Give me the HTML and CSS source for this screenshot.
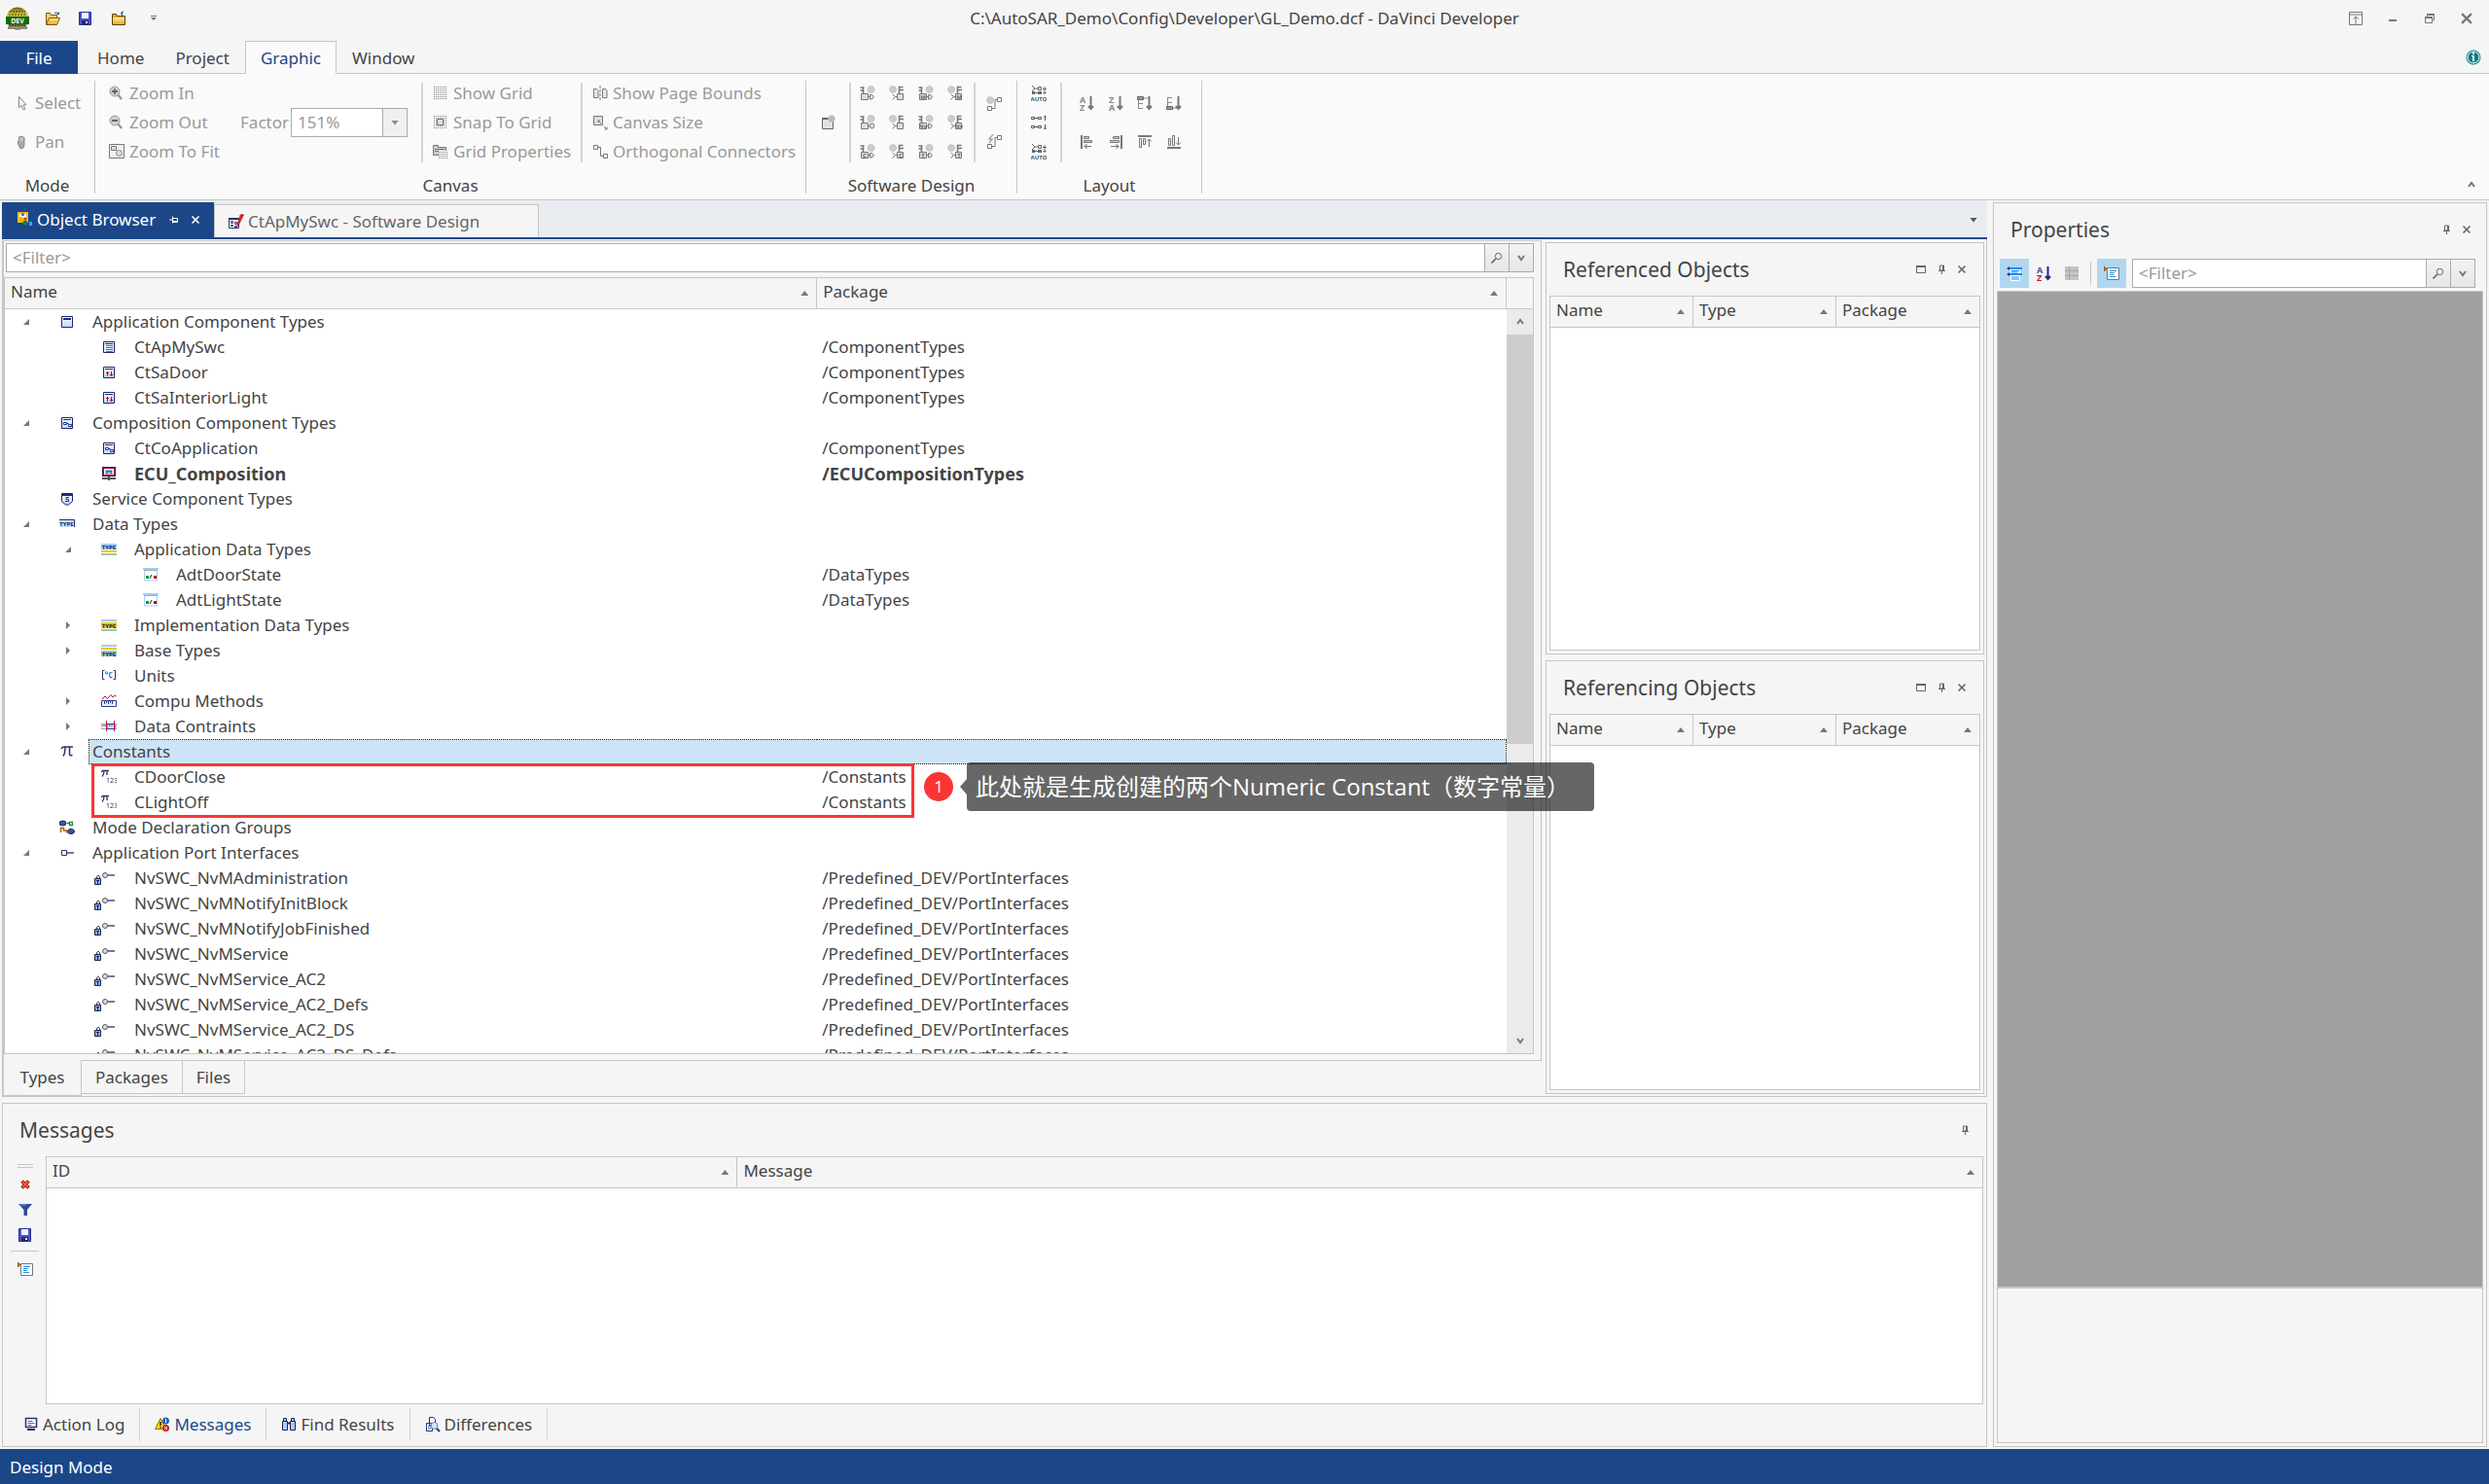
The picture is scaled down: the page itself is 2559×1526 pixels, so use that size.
FILE: index.html
```html
<!DOCTYPE html>
<html lang="en">
<head>
<meta charset="utf-8">
<title>GL_Demo.dcf - DaVinci Developer</title>
<link rel="stylesheet" href="styles.css">
</head>
<body>
<svg class="paints" aria-hidden="true">
  <defs>
    <linearGradient id="gold" x1="0" y1="0" x2="0" y2="1"><stop offset="0" stop-color="#ffe9a0"/><stop offset="1" stop-color="#f0a81c"/></linearGradient>
    <linearGradient id="sky" x1="0" y1="0" x2="0" y2="1"><stop offset="0" stop-color="#fff"/><stop offset="1" stop-color="#bcd6fa"/></linearGradient>
    <linearGradient id="ball" x1="0" y1="0" x2="0" y2="1"><stop offset="0" stop-color="#6a5a10"/><stop offset=".3" stop-color="#e0c63a"/><stop offset="1" stop-color="#5e4d0c"/></linearGradient>
  </defs>
</svg>
<svg class="symbols" aria-hidden="true">
  <symbol id="logo" viewBox="0 0 24 24"><circle cx="12" cy="12" r="11.500" fill="url(#ball)"/><path d="M4 5h16M3 8h18M3 19h18" stroke="#3b320a" stroke-dasharray="2 1"/><rect y="10" width="24" height="8" fill="#0b6b12"/><path d="M2 20h20v3H2z" fill="#8d8a7a"/><text x="12" y="16.500" font-size="7" font-weight="700" text-anchor="middle" fill="#fff">DEV</text></symbol>
  <symbol id="open" viewBox="0 0 16 16"><path d="M1.500 14.500v-12h4l1 2h6v3" fill="#f7cf6a" stroke="#7a5a18"/><path d="M1.500 14.500l3-7h11l-3 7z" fill="url(#gold)" stroke="#7a5a18"/><path d="M10 2.500q3-2 4 1M12.500 3.500h2v-2" fill="none" stroke="#2c4a82"/></symbol>
  <symbol id="save" viewBox="0 0 16 16"><path d="M1.500 1.500h12v13h-12z" fill="#4a52c8" stroke="#2b2f8c"/><path d="M4 2h7v6H4z" fill="#eef4ff"/><path d="M4 10h7v4H4z" fill="#26295e"/><path d="M8 11h2v2H8z" fill="#fff"/></symbol>
  <symbol id="closef" viewBox="0 0 16 16"><path d="M1.500 14.500v-11h4l1 2h8v9z" fill="#e8a81c" stroke="#5c430c"/><path d="M2 7h12v7H2z" fill="url(#gold)"/><path d="M11.500 5V1.500M10 3l1.500-1.500L13 1" fill="none" stroke="#2c4a82"/></symbol>
  <symbol id="more" viewBox="0 0 8 8"><path d="M1 1.500h6" stroke="#777"/><path d="M1 3h6L4 6z" fill="#777"/></symbol>
  <symbol id="pin" viewBox="0 0 10 10"><path d="M3.500 1h4v5h-4zM2 6.500h7M5.500 7v3" fill="none" stroke="#666"/><path d="M6 1h2v5H6z" fill="#666"/></symbol>
  <symbol id="pinside" viewBox="0 0 10 10"><path d="M3.500 1.500v7M0 5h3M4 3.500h4.500v4H4M4 6.500h4" fill="none" stroke="#fff"/></symbol>
  <symbol id="x" viewBox="0 0 10 10"><path d="M1.500 1.500l7 7M8.500 1.500l-7 7" fill="none" stroke="currentColor" stroke-width="1.600"/></symbol>
  <symbol id="max" viewBox="0 0 10 10"><path d="M.5 2h9v6.500h-9z" fill="none" stroke="#666"/><path d="M0 1h10v2H0z" fill="#666"/></symbol>
  <symbol id="ribbonmin" viewBox="0 0 14 14"><path d="M.5.5h13v13H.5zM1 3h12M7 13V5M4.500 7.500L7 5l2.500 2.500" fill="none" stroke="#777"/></symbol>
  <symbol id="min" viewBox="0 0 14 14"><path d="M3 8h8v2H3z" fill="#777"/></symbol>
  <symbol id="restore" viewBox="0 0 14 14"><path d="M2.500 6.500h7v5h-7zM4.500 5V3.500h7v5H10" fill="none" stroke="#777"/><path d="M2 5h8v2H2zM4 2h8v2H4z" fill="#777"/></symbol>
  <symbol id="info" viewBox="0 0 16 16"><circle cx="8" cy="8" r="7.500" fill="#0a8a90"/><circle cx="8" cy="8" r="6" fill="#0b7f85" stroke="#fff"/><path d="M7 3h2v2H7zM6 6h3v6H7V7H6z" fill="#fff"/></symbol>
  <symbol id="mag" viewBox="0 0 12 12"><circle cx="7.500" cy="4.500" r="3.200" fill="none" stroke="#666"/><path d="M5 7l-4.500 4.500" stroke="#666" stroke-width="1.600"/></symbol>
  <symbol id="chev" viewBox="0 0 10 10"><path d="M2 3l3 4 3-4" fill="none" stroke="#777" stroke-width="2"/></symbol>
  <symbol id="chevup" viewBox="0 0 10 10"><path d="M2 7l3-4 3 4" fill="none" stroke="#777" stroke-width="2"/></symbol>

  <symbol id="arrow" viewBox="0 0 16 16"><path d="M5.500 1.500v11l2.500-2 2 4.500 2-1-2-4 3-.5z" fill="#f2f2f2" stroke="#888"/></symbol>
  <symbol id="hand" viewBox="0 0 16 16"><path d="M6 13q-2-3-1.500-6l1-.5V3q1-1.500 1.500 0 1-2 2 0 1.500-1 2 1v6q0 3-1.500 4.500h-3z" fill="#aaa" stroke="#888"/><path d="M7 3v4M9 3v4" stroke="#eee" stroke-width=".7"/></symbol>
  <symbol id="zin" viewBox="0 0 16 16"><path d="M9 9l4 5" stroke="#999" stroke-width="2.400"/><circle cx="6" cy="6" r="5" fill="#d0d0d0" stroke="#9a9a9a"/><path d="M3 6h6M6 3v6" stroke="#666" stroke-width="1.800"/></symbol>
  <symbol id="zout" viewBox="0 0 16 16"><path d="M9 9l4 5" stroke="#999" stroke-width="2.400"/><circle cx="6" cy="6" r="5" fill="#d0d0d0" stroke="#9a9a9a"/><path d="M3 6h6" stroke="#666" stroke-width="2"/></symbol>
  <symbol id="zfit" viewBox="0 0 16 16"><path d="M.5.5h15v14H.5z" fill="#f0f0f0" stroke="#777"/><path d="M2.500 2.500h5v4h-5z" fill="#ddd" stroke="#777"/><circle cx="10.500" cy="9.500" r="3" fill="#ddd" stroke="#888"/></symbol>
  <symbol id="grid" viewBox="0 0 16 16"><path d="M1 1.500h13M1 3.500h13M1 5.500h13M1 7.500h13M1 9.500h13M1 11.500h13M1 13.500h13" stroke="#777" stroke-dasharray="1 1"/></symbol>
  <symbol id="snap" viewBox="0 0 16 16"><path d="M1 1.500h13M1 3.500h13M1 5.500h13M1 7.500h13M1 9.500h13M1 11.500h13M1 13.500h13" stroke="#777" stroke-dasharray="1 1"/><path d="M4.500 4.500h6v6h-6z" fill="#ddd" stroke="#777"/></symbol>
  <symbol id="gridp" viewBox="0 0 16 16"><path d="M.5 3.500v-2h5v2h8v8H.5z" fill="#ccc" stroke="#777"/><path d="M2 5.500h10M2 7.500h4" stroke="#777"/><path d="M6 7h9v8H6z" fill="#fafafa"/><path d="M6 8.500h9M6 10.500h9M6 12.500h9M6 14.500h9" stroke="#777" stroke-dasharray="1 1"/></symbol>
  <symbol id="pages" viewBox="0 0 16 16"><path d="M1.500 3.500h3l1.500 2v7H1.500zM10.500 3.500h3l1.500 2v7h-4.500z" fill="#e8e8e8" stroke="#777"/><path d="M8 0v16" stroke="#777" stroke-dasharray="3 1"/></symbol>
  <symbol id="csize" viewBox="0 0 16 16"><path d="M1.500 1.500h9v9h-9z" fill="#ddd" stroke="#777"/><path d="M9 9L6 6M6 8V6h2M12 12l3 3M15 12.500V15h-2.500" stroke="#777" fill="none"/></symbol>
  <symbol id="ortho" viewBox="0 0 16 16"><path d="M1.500 1.500h4v4h-4zM11.500 10.500h4v4h-4zM5.500 3.500h3v9h3" fill="none" stroke="#777"/></symbol>
  <symbol id="newc" viewBox="0 0 16 16"><path d="M2.500 3.500h11v11h-11z" fill="#e2e2e2" stroke="#666"/><path d="M2 3h7v2H2z" fill="#666"/><circle cx="12" cy="4" r="3.500" fill="#bbb" stroke="#ccc" stroke-dasharray="1 1"/></symbol>
  <symbol id="pport" viewBox="0 0 16 16"><path d="M.5 2h4M3.500 2v6M.5 5h3" stroke="#777" stroke-width="1.600" fill="none"/><circle cx="11.500" cy="4" r="3.500" fill="#ccc" stroke="#aaa" stroke-dasharray="1 1"/><path d="M1.500 8.500h7v6h-7zM8.500 11.500h2M10.500 9.500h2l2 2-2 2.500h-2z" fill="#ddd" stroke="#777"/></symbol>
  <symbol id="sport" viewBox="0 0 16 16"><path d="M.5 2h4M3.500 2v6M.5 5h3" stroke="#777" stroke-width="1.600" fill="none"/><circle cx="11.500" cy="4" r="3.500" fill="#ccc" stroke="#aaa" stroke-dasharray="1 1"/><path d="M1.500 8.500h7v6h-7zM8.500 11.500h2" fill="#ddd" stroke="#777"/><circle cx="12.500" cy="11.500" r="2.500" fill="#ddd" stroke="#777"/></symbol>
  <symbol id="rport" viewBox="0 0 16 16"><path d="M10.500 8V1.500h4M11 4.500h4" stroke="#777" stroke-width="1.600" fill="none"/><circle cx="4" cy="4" r="3.500" fill="#ccc" stroke="#aaa" stroke-dasharray="1 1"/><path d="M8.500 8.500h6v6h-6z" fill="#ddd" stroke="#777"/><path d="M3.500 9l3 2.500-3 3M6.500 11.500h2" fill="none" stroke="#777"/></symbol>
  <symbol id="conn" viewBox="0 0 16 16"><circle cx="4" cy="5" r="3.500" fill="#ccc" stroke="#aaa" stroke-dasharray="1 1"/><path d="M11.500 2.500h4v4h-4zM1.500 11.500h4v4h-4zM11 4.500H9v9H6" fill="none" stroke="#777"/></symbol>
  <symbol id="conn2" viewBox="0 0 16 16"><path d="M7 0L3 5h3l-3 4" fill="none" stroke="#aaa" stroke-width="1.500"/><path d="M11.500 1.500h4v4h-4zM1.500 10.500h4v4h-4zM11 3.500H9v9H6" fill="none" stroke="#777"/></symbol>
  <symbol id="auto" viewBox="0 0 16 16"><path d="M1 0l3 3h3M1 6l3-3M7.500 1.500h3v3h-3zM2 7.500h6M12 3.500h4M14 1v8M12.500 7.500h3" fill="none" stroke="#666"/><path d="M1 6h3v3H1zM7 6h4v3H7z" fill="#666"/><text x="8" y="16" font-size="6" font-weight="700" text-anchor="middle" fill="#555">AUTO</text></symbol>
  <symbol id="dist" viewBox="0 0 16 16"><path d="M.5 2.500h3v2h-3zM7.500 2.500h3v2h-3zM3 3.500h4M14.500 6V1M13 2.500L14.500 1 16 2.500M.5 11.500h3v2h-3zM7.500 11.500h3v2h-3zM3 12.500h4M14.500 10v5M13 13.500l1.500 1.500 1.500-1.500" fill="none" stroke="#555"/></symbol>
  <symbol id="az" viewBox="0 0 16 16"><text x="1" y="7.500" font-size="9" font-weight="700" fill="#888">A</text><text x="1" y="15.500" font-size="9" font-weight="700" fill="#888">Z</text><path d="M12.500 1v12M10 11l2.500 3 2.500-3" fill="none" stroke="#777" stroke-width="2"/></symbol>
  <symbol id="za" viewBox="0 0 16 16"><text x="1" y="7.500" font-size="9" font-weight="700" fill="#888">Z</text><text x="1" y="15.500" font-size="9" font-weight="700" fill="#888">A</text><path d="M12.500 1v12M10 11l2.500 3 2.500-3" fill="none" stroke="#777" stroke-width="2"/></symbol>
  <symbol id="azc" viewBox="0 0 16 16"><text x="1" y="7.500" font-size="9" font-weight="700" fill="#4a4f94">A</text><text x="1" y="15.500" font-size="9" font-weight="700" fill="#c3122e">Z</text><path d="M12.500 1v12M10 11l2.500 3 2.500-3" fill="none" stroke="#1f2a80" stroke-width="2"/></symbol>
  <symbol id="st" viewBox="0 0 16 16"><path d="M.5 1.500h6v3h-6z" fill="#999" stroke="#666"/><path d="M1.500 5v9M2 8.500h4M2 13.500h4M7 3h4" fill="none" stroke="#888"/><path d="M12.500 1v12M10 11l2.500 3 2.500-3" fill="none" stroke="#777" stroke-width="2"/></symbol>
  <symbol id="sb" viewBox="0 0 16 16"><path d="M.5 11.500h6v3h-6z" fill="#999" stroke="#666"/><path d="M1.500 2v9M2 2.500h4M2 7.500h4M7 13h4" fill="none" stroke="#888"/><path d="M12.500 1v12M10 11l2.500 3 2.500-3" fill="none" stroke="#777" stroke-width="2"/></symbol>
  <symbol id="al" viewBox="0 0 16 16"><path d="M3 1v14" stroke="#777" stroke-width="2"/><path d="M5.500 2.500h5v2h-5zM5.500 6.500h8v2h-8zM13 12.500H6M8.500 10L6 12.500 8.500 15" fill="#ccc" stroke="#777"/></symbol>
  <symbol id="ar" viewBox="0 0 16 16"><path d="M14 1v14" stroke="#777" stroke-width="2"/><path d="M5.500 2.500h6v2h-6zM2.500 6.500h9v2h-9zM3 12.500h8M8.500 10l2.500 2.500L8.500 15" fill="#ccc" stroke="#777"/></symbol>
  <symbol id="at" viewBox="0 0 16 16"><path d="M1 2h14" stroke="#777" stroke-width="2"/><path d="M2.500 4.500h2v9h-2zM6.500 4.500h2v6h-2zM12.500 13V5M10 7.500L12.500 5 15 7.500" fill="none" stroke="#777"/></symbol>
  <symbol id="ab" viewBox="0 0 16 16"><path d="M1 14h14" stroke="#777" stroke-width="2"/><path d="M2.500 4.500h2v7h-2zM6.500 1.500h2v10h-2zM12.500 3v8M10 8.500l2.500 2.500L15 8.500" fill="none" stroke="#777"/></symbol>

  <symbol id="obj" viewBox="0 0 16 16"><path d="M1 1h9v9H1z" fill="#fff" stroke="#f0c030" stroke-width="2"/><path d="M4 1h3v3H4z" fill="#4a7ad0"/><circle cx="4" cy="8" r="3" fill="#f5b400"/><circle cx="8" cy="11" r="2.500" fill="#14843c"/><circle cx="8" cy="7" r="1.500" fill="#d8222e"/><path d="M12 10h3v4h-3z" fill="#3aa0f0"/></symbol>
  <symbol id="sdes" viewBox="0 0 16 16"><path d="M.5 4.500h10v10H.5z" fill="#fff" stroke="#2b2f5e"/><path d="M0 4h10v2H0z" fill="#2b2f5e"/><path d="M2.500 7.500h2v2h-2zM6.500 8.500h2v2h-2zM2.500 11.500h2v1h-2zM6.500 12.500h2v1h-2z" fill="none" stroke="#33387a"/><path d="M15.500 1l-5 10-1.500 2 .2-3L12 1q2-1.500 3.500 0z" fill="#e0222e" stroke="#a01020" stroke-width=".6"/></symbol>

  <symbol id="win" viewBox="0 0 16 16"><path d="M2.500 2.500h11v11h-11z" fill="url(#sky)" stroke="#22226a"/><path d="M4 4h8v2H4z" fill="#1b2c7c"/></symbol>
  <symbol id="swc" viewBox="0 0 16 16"><path d="M2.500 2.500h11v11h-11z" fill="#e8f3ff" stroke="#22226a"/><path d="M4 4h8v1H4z" fill="#1b2c7c"/><path d="M5 6.500h7M5 8.500h7M5 10.500h7M5 12.500h7" stroke="#0a84e0"/></symbol>
  <symbol id="sa" viewBox="0 0 16 16"><path d="M2.500 2.500h11v11h-11z" fill="url(#sky)" stroke="#22226a"/><path d="M4 4h8v1H4z" fill="#1b2c7c"/><path d="M6.500 12V7M5 8.500h3M10.500 7v5M9 10.500h3" stroke="#b8002a"/></symbol>
  <symbol id="comp" viewBox="0 0 16 16"><path d="M2.500 2.500h11v11h-11z" fill="url(#sky)" stroke="#22226a"/><path d="M4 4h8v1H4z" fill="#1b2c7c"/><path d="M4.500 7.500h3v2h-3zM9.500 9.500h3v2h-3zM8 8.500h1.500" fill="#fff" stroke="#123a9a"/></symbol>
  <symbol id="ecu" viewBox="0 0 16 16"><path d="M2 2h12v8H2z" fill="#fff" stroke="#3a1c4c" stroke-width="2"/><path d="M2.500 2.500h11v7h-11z" fill="none" stroke="#a01040"/><path d="M4.500 5.500h7M4.500 7.500h3M8.500 7.500h3" stroke="#0a5aa8" stroke-width="1.500"/><path d="M1 13h14M8 11v4" stroke="#555" stroke-width="2"/></symbol>
  <symbol id="svc" viewBox="0 0 16 16"><path d="M2.500 2.500h11v8l-4 3.500h-3l-4-3.500z" fill="url(#sky)" stroke="#22226a"/><path d="M3 3h10v2H3z" fill="#1b2c7c"/><path d="M10 6.500H7v2h2.500v2H6" fill="none" stroke="#2f2f74"/></symbol>
  <symbol id="type" viewBox="0 0 16 16"><path d="M0 3h15v8H0z" fill="#c4e0ff"/><path d="M0 3.500h15.500V11" fill="none" stroke="#2f2f74"/><text x="7.500" y="10" font-size="6" font-weight="700" text-anchor="middle" fill="#22225c">TYPE</text></symbol>
  <symbol id="adt" viewBox="0 0 16 16"><path d="M0 2h16v6H0z" fill="#9fcdfa"/><path d="M0 9h16v2H0z" fill="#f5c400"/><path d="M0 12h16v2H0z" fill="#9cc8b0"/><text x="8" y="7.500" font-size="6" font-weight="700" text-anchor="middle" fill="#22225c">TYPE</text></symbol>
  <symbol id="idt" viewBox="0 0 16 16"><path d="M0 2h16v2H0z" fill="#9fcdfa"/><path d="M0 5h16v6H0z" fill="#f5c400"/><path d="M0 12h16v2H0z" fill="#9cc8b0"/><text x="8" y="10.500" font-size="6" font-weight="700" text-anchor="middle" fill="#22225c">TYPE</text></symbol>
  <symbol id="bdt" viewBox="0 0 16 16"><path d="M0 2h16v2H0z" fill="#9fcdfa"/><path d="M0 5h16v2H0z" fill="#f5c400"/><path d="M0 8h16v6H0z" fill="#9cc8b0"/><text x="8" y="13.500" font-size="6" font-weight="700" text-anchor="middle" fill="#22225c">TYPE</text></symbol>
  <symbol id="enum" viewBox="0 0 16 16"><path d="M1.500 2v12h13V2" fill="#fff" stroke="#9fcdfa"/><path d="M0 1h16v2H0z" fill="#9fcdfa"/><path d="M1 3h14v1H1z" fill="#aaa"/><path d="M3 9h3v3H3z" fill="#0a9a1c"/><path d="M7 12l2-4" stroke="#222"/><path d="M11 9h3v3h-3z" fill="#b8002a"/></symbol>
  <symbol id="unit" viewBox="0 0 16 16"><path d="M3.500 2.500h-2v9h2M12.500 2.500h2v9h-2" fill="none" stroke="#2f2f74"/><circle cx="5.500" cy="5" r="1.200" fill="none" stroke="#0a84d0"/><path d="M11.500 5q-3-1.500-3 2t3 2.500" fill="none" stroke="#0a84d0" stroke-width="1.300"/></symbol>
  <symbol id="compu" viewBox="0 0 16 16"><path d="M1 6l3-3 2.500 2.500L10 1.500 12 4l2-2 1.500 1" fill="none" stroke="#b8104a"/><path d="M.5 7.500h15v6H.5z" fill="#e0f0ff" stroke="#2f3f8c"/><path d="M3.500 8v3M5.500 8v2M7.500 8v3M9.500 8v2M11.500 8v3" stroke="#2f3f8c"/></symbol>
  <symbol id="constr" viewBox="0 0 16 16"><path d="M0 5.500h16v5H0z" fill="#eee" stroke="#aaa"/><path d="M6 5.500h8v5H6z" fill="#cfe4ff" stroke="#2f3f8c"/><path d="M2 6v2M4 6v2M8.500 6v2M11 6v2" stroke="#667"/><path d="M5.500 2v11M13.500 2v11" stroke="#c0104a"/></symbol>
  <symbol id="pi" viewBox="0 0 16 16"><path d="M2 5q1-2 3-2h9M6 3.500q0 6-2 9M10.500 3.500v7q.5 2 3 1" fill="none" stroke="#2f2f64" stroke-width="1.500"/></symbol>
  <symbol id="pinum" viewBox="0 0 16 16"><path d="M0 3q1-1.500 2-1.500h6M3 2q0 3-2 5.500M6 2v4" fill="none" stroke="#2f2f64" stroke-width="1.300"/><text x="5" y="14" font-size="7" fill="#2f2f64">123</text></symbol>
  <symbol id="mode" viewBox="0 0 16 16"><ellipse cx="3.500" cy="3.500" rx="3.500" ry="2.500" fill="#3a58a0" stroke="#1c2450"/><ellipse cx="12" cy="12" rx="3.500" ry="2.500" fill="#3a58a0" stroke="#1c2450"/><path d="M8 3.500h2M10.500 2.500h3v3h-3z" fill="none" stroke="#1c8a50" stroke-width="1.300"/><path d="M1.500 13V8.500h3V11h3v2.500" fill="none" stroke="#b86010" stroke-width="1.500"/></symbol>
  <symbol id="port" viewBox="0 0 16 16"><path d="M2.500 5.500h5v5h-5z" fill="#fff" stroke="#2f2f64"/><path d="M8 8h7" stroke="#2f2f64" stroke-width="1.300"/></symbol>
  <symbol id="nv" viewBox="0 0 22 16"><path d="M2.500 8V6.500q1.500-2.500 3 0V8" fill="none" stroke="#333"/><path d="M.5 8.500h6v6h-6z" fill="#8faaf0" stroke="#1c2450"/><path d="M2 10.500h3M3.500 11v3" stroke="#1c2450"/><circle cx="11" cy="5" r="2.500" fill="#ddd" stroke="#556"/><path d="M14 5h7" stroke="#2f2f64" stroke-width="1.300"/></symbol>
  <symbol id="del" viewBox="0 0 16 16"><path d="M4.500 4.500l7 7M11.500 4.500l-7 7" stroke="#a01c08" stroke-width="3.600"/><path d="M5 5l6 6M11 5l-6 6" stroke="#ff6a3a" stroke-width="1.600"/></symbol>
  <symbol id="funnel" viewBox="0 0 16 16"><path d="M1 2h14L10 8v6H6.500V8z" fill="#2f4a9a"/><path d="M3 3h6" stroke="#7ba0d8"/></symbol>
  <symbol id="desc" viewBox="0 0 16 16"><path d="M3.500 2.500h12v12h-12z" fill="#fff" stroke="#777"/><path d="M6 5.500h7M6 7.500h5M6 9.500h4M6 11.500h6" stroke="#1c90e8"/><path d="M0 1l3 2.500L0 6z" fill="#b87414" stroke="#8a5408"/></symbol>
  <symbol id="cat" viewBox="0 0 16 16"><path d="M4 2h10v14H4z" fill="#fff"/><path d="M2 3h14M2 9h14" stroke="#0a8cf0" stroke-width="2"/><path d="M5 5.500h8M5 7h6M5 12h8M5 14h8" stroke="#0a8cf0"/><path d="M0 3l3-2v4zM0 9l3-2v4z" fill="#223a8c"/></symbol>
  <symbol id="list" viewBox="0 0 16 16"><path d="M1 1h14v14H1z" fill="#c4c4c4"/><path d="M1 5.500h14M1 10.500h14M5.500 1v14" stroke="#a5a5a5"/></symbol>
  <symbol id="mon" viewBox="0 0 16 16"><path d="M2.500 1.500h11v9h-11z" fill="#fff" stroke="#2f2f5c" stroke-width="1.500"/><path d="M4.500 4.500h5M4.500 6.500h7M4.500 8.500h4" stroke="#2a70c8"/><path d="M4 13h8" stroke="#2f2f5c" stroke-width="2"/></symbol>
  <symbol id="warn" viewBox="0 0 16 16"><path d="M6 1.500l5.500 11H.5z" fill="#ffe000" stroke="#8a7200"/><path d="M6 5v4M6 10v1.500" stroke="#222" stroke-width="1.500"/><circle cx="11.500" cy="4" r="3.500" fill="#1c64c0"/><path d="M11.500 2v4" stroke="#fff"/><circle cx="11.500" cy="11.500" r="3.500" fill="#c81c2c"/><path d="M10 10l3 3M13 10l-3 3" stroke="#fff"/></symbol>
  <symbol id="bino" viewBox="0 0 16 16"><path d="M2.500 1.500h3v3h-3zM10.500 1.500h3v3h-3zM1.500 4.500h5v9h-5zM9.500 4.500h5v9h-5z" fill="#a9cdf8" stroke="#22225c"/><path d="M7 6.500h2" stroke="#22225c" stroke-width="2"/></symbol>
  <symbol id="diff" viewBox="0 0 16 16"><path d="M4.500.5h4l2 2v6h-6zM1.500 6.500h6v8h-6z" fill="#fff" stroke="#2f2f74"/><path d="M3 9.500h3M3 11.500h3" stroke="#2a70c8"/><circle cx="9.500" cy="9" r="3.500" fill="#cfe4ff" stroke="#6078a8"/><path d="M12 12l3 3" stroke="#2f2f74" stroke-width="2"/></symbol>
</svg>

<header class="titlebar">
  <svg class="logo"><use href="#logo"/></svg>
  <div class="quick">
    <button aria-label="Open"><svg class="i"><use href="#open"/></svg></button>
    <button aria-label="Save"><svg class="i"><use href="#save"/></svg></button>
    <button aria-label="Close project"><svg class="i"><use href="#closef"/></svg></button>
    <button aria-label="Customize" class="custom"><svg><use href="#more"/></svg></button>
  </div>
  <h1>C:\AutoSAR_Demo\Config\Developer\GL_Demo.dcf - DaVinci Developer</h1>
  <div class="wincontrols">
    <button aria-label="Ribbon options"><svg><use href="#ribbonmin"/></svg></button>
    <button aria-label="Minimize"><svg><use href="#min"/></svg></button>
    <button aria-label="Restore"><svg><use href="#restore"/></svg></button>
    <button aria-label="Close"><svg><use href="#x"/></svg></button>
  </div>
</header>

<nav class="menu">
  <button class="file">File</button>
  <button>Home</button>
  <button>Project</button>
  <button class="on">Graphic</button>
  <button>Window</button>
  <svg class="i about"><use href="#info"/></svg>
</nav>

<section class="ribbon">
  <div class="group g-mode">
    <div class="tools">
      <div class="stack two">
        <button disabled><svg class="i"><use href="#arrow"/></svg>Select</button>
        <button disabled><svg class="i"><use href="#hand"/></svg>Pan</button>
      </div>
    </div>
    <h2>Mode</h2>
  </div>
  <div class="group g-canvas">
    <div class="tools">
      <div class="stack zooms">
        <button disabled><svg class="i"><use href="#zin"/></svg>Zoom In</button>
        <button disabled><svg class="i"><use href="#zout"/></svg>Zoom Out</button>
        <button disabled><svg class="i"><use href="#zfit"/></svg>Zoom To Fit</button>
      </div>
      <div class="factor">
        <label for="factor">Factor</label>
        <div class="combo"><input id="factor" value="151%" disabled><button disabled aria-label="Choose factor"><span class="down"></span></button></div>
      </div>
      <div class="stack ruled">
        <button disabled><svg class="i"><use href="#grid"/></svg>Show Grid</button>
        <button disabled><svg class="i"><use href="#snap"/></svg>Snap To Grid</button>
        <button disabled><svg class="i"><use href="#gridp"/></svg>Grid Properties</button>
      </div>
      <div class="stack ruled">
        <button disabled><svg class="i"><use href="#pages"/></svg>Show Page Bounds</button>
        <button disabled><svg class="i"><use href="#csize"/></svg>Canvas Size</button>
        <button disabled><svg class="i"><use href="#ortho"/></svg>Orthogonal Connectors</button>
      </div>
    </div>
    <h2>Canvas</h2>
  </div>
  <div class="group g-design">
    <div class="tools">
      <div class="stack two single"><button disabled aria-label="New component"><svg class="i"><use href="#newc"/></svg></button></div>
      <div class="matrix ruled">
        <button disabled aria-label="Sender port"><svg class="i"><use href="#pport"/></svg></button>
        <button disabled aria-label="Receiver port"><svg class="i"><use href="#rport"/></svg></button>
        <button disabled aria-label="Mode sender port"><svg class="i" viewBox="0 0 16 16"><use href="#pport"/><text x="5" y="14" class="tag">M</text></svg></button>
        <button disabled aria-label="Mode receiver port"><svg class="i" viewBox="0 0 16 16"><use href="#rport"/><text x="12" y="14" class="tag">M</text></svg></button>
        <button disabled aria-label="Server port"><svg class="i"><use href="#sport"/></svg></button>
        <button disabled aria-label="Client port"><svg class="i"><use href="#rport"/></svg></button>
        <button disabled aria-label="Nv provide port"><svg class="i" viewBox="0 0 16 16"><use href="#pport"/><text x="5" y="14" class="tag">Nv</text></svg></button>
        <button disabled aria-label="Nv require port"><svg class="i" viewBox="0 0 16 16"><use href="#rport"/><text x="12" y="14" class="tag">Nv</text></svg></button>
        <button disabled aria-label="Calibration provide port"><svg class="i" viewBox="0 0 16 16"><use href="#pport"/><text x="5" y="14" class="tag">C</text></svg></button>
        <button disabled aria-label="Calibration require port"><svg class="i" viewBox="0 0 16 16"><use href="#rport"/><text x="12" y="14" class="tag">C</text></svg></button>
        <button disabled aria-label="Trigger provide port"><svg class="i" viewBox="0 0 16 16"><use href="#pport"/><text x="5" y="14" class="tag">T</text></svg></button>
        <button disabled aria-label="Trigger require port"><svg class="i" viewBox="0 0 16 16"><use href="#rport"/><text x="12" y="14" class="tag">T</text></svg></button>
      </div>
      <div class="stack two ruled narrow">
        <button disabled aria-label="New connector"><svg class="i"><use href="#conn"/></svg></button>
        <button disabled aria-label="Auto connect"><svg class="i"><use href="#conn2"/></svg></button>
      </div>
    </div>
    <h2>Software Design</h2>
  </div>
  <div class="group g-layout">
    <div class="tools">
      <div class="stack single">
        <button disabled aria-label="Auto arrange ports"><svg class="i"><use href="#auto"/></svg></button>
        <button disabled aria-label="Distribute"><svg class="i"><use href="#dist"/></svg></button>
        <button disabled aria-label="Auto arrange connectors"><svg class="i"><use href="#auto"/></svg></button>
      </div>
      <div class="matrix rows2 ruled">
        <button disabled aria-label="Sort ascending"><svg class="i"><use href="#az"/></svg></button>
        <button disabled aria-label="Sort descending"><svg class="i"><use href="#za"/></svg></button>
        <button disabled aria-label="Move to top"><svg class="i"><use href="#st"/></svg></button>
        <button disabled aria-label="Move to bottom"><svg class="i"><use href="#sb"/></svg></button>
        <button disabled aria-label="Align left"><svg class="i"><use href="#al"/></svg></button>
        <button disabled aria-label="Align right"><svg class="i"><use href="#ar"/></svg></button>
        <button disabled aria-label="Align top"><svg class="i"><use href="#at"/></svg></button>
        <button disabled aria-label="Align bottom"><svg class="i"><use href="#ab"/></svg></button>
      </div>
    </div>
    <h2>Layout</h2>
  </div>
  <button class="collapse" aria-label="Collapse ribbon"><svg class="s"><use href="#chevup"/></svg></button>
</section>

<main class="workspace">
  <div class="left">
    <section class="docs">
      <div class="doctabs">
        <div class="doctab on"><svg class="i"><use href="#obj"/></svg><span>Object Browser</span><svg class="s pin"><use href="#pinside"/></svg><svg class="s"><use href="#x"/></svg></div>
        <div class="doctab"><svg class="i"><use href="#sdes"/></svg><span>CtApMySwc - Software Design</span></div>
        <button class="more" aria-label="Open documents"><span class="down dark"></span></button>
      </div>
      <div class="frame">
        <div class="browser">
          <div class="browser-box">
            <div class="search"><input placeholder="&lt;Filter&gt;" aria-label="Filter objects"><button aria-label="Search"><svg class="m"><use href="#mag"/></svg></button><button aria-label="Filter history"><svg class="s"><use href="#chev"/></svg></button></div>
            <div class="treegrid">
              <div class="treeview">
                <table class="tree">
                  <colgroup><col class="c-name"><col></colgroup>
                  <thead><tr><th>Name</th><th>Package</th></tr></thead>
                  <tbody>
                    <tr><td><div class="node"><button class="tw open" aria-label="Collapse"></button><svg class="i"><use href="#win"/></svg><span>Application Component Types</span></div></td><td></td></tr>
                    <tr class="l1"><td><div class="node"><i class="tw"></i><svg class="i"><use href="#swc"/></svg><span>CtApMySwc</span></div></td><td>/ComponentTypes</td></tr>
                    <tr class="l1"><td><div class="node"><i class="tw"></i><svg class="i"><use href="#sa"/></svg><span>CtSaDoor</span></div></td><td>/ComponentTypes</td></tr>
                    <tr class="l1"><td><div class="node"><i class="tw"></i><svg class="i"><use href="#sa"/></svg><span>CtSaInteriorLight</span></div></td><td>/ComponentTypes</td></tr>
                    <tr><td><div class="node"><button class="tw open" aria-label="Collapse"></button><svg class="i"><use href="#comp"/></svg><span>Composition Component Types</span></div></td><td></td></tr>
                    <tr class="l1"><td><div class="node"><i class="tw"></i><svg class="i"><use href="#comp"/></svg><span>CtCoApplication</span></div></td><td>/ComponentTypes</td></tr>
                    <tr class="l1 strong"><td><div class="node"><i class="tw"></i><svg class="i"><use href="#ecu"/></svg><span>ECU_Composition</span></div></td><td>/ECUCompositionTypes</td></tr>
                    <tr><td><div class="node"><i class="tw"></i><svg class="i"><use href="#svc"/></svg><span>Service Component Types</span></div></td><td></td></tr>
                    <tr><td><div class="node"><button class="tw open" aria-label="Collapse"></button><svg class="i"><use href="#type"/></svg><span>Data Types</span></div></td><td></td></tr>
                    <tr class="l1"><td><div class="node"><button class="tw open" aria-label="Collapse"></button><svg class="i"><use href="#adt"/></svg><span>Application Data Types</span></div></td><td></td></tr>
                    <tr class="l2"><td><div class="node"><i class="tw"></i><svg class="i"><use href="#enum"/></svg><span>AdtDoorState</span></div></td><td>/DataTypes</td></tr>
                    <tr class="l2"><td><div class="node"><i class="tw"></i><svg class="i"><use href="#enum"/></svg><span>AdtLightState</span></div></td><td>/DataTypes</td></tr>
                    <tr class="l1"><td><div class="node"><button class="tw shut" aria-label="Expand"></button><svg class="i"><use href="#idt"/></svg><span>Implementation Data Types</span></div></td><td></td></tr>
                    <tr class="l1"><td><div class="node"><button class="tw shut" aria-label="Expand"></button><svg class="i"><use href="#bdt"/></svg><span>Base Types</span></div></td><td></td></tr>
                    <tr class="l1"><td><div class="node"><i class="tw"></i><svg class="i"><use href="#unit"/></svg><span>Units</span></div></td><td></td></tr>
                    <tr class="l1"><td><div class="node"><button class="tw shut" aria-label="Expand"></button><svg class="i"><use href="#compu"/></svg><span>Compu Methods</span></div></td><td></td></tr>
                    <tr class="l1"><td><div class="node"><button class="tw shut" aria-label="Expand"></button><svg class="i"><use href="#constr"/></svg><span>Data Contraints</span></div></td><td></td></tr>
                    <tr class="selected"><td><div class="node"><button class="tw open" aria-label="Collapse"></button><svg class="i"><use href="#pi"/></svg><span>Constants</span></div></td><td></td></tr>
                    <tr class="l1"><td><div class="node"><i class="tw"></i><svg class="i"><use href="#pinum"/></svg><span>CDoorClose</span></div></td><td>/Constants</td></tr>
                    <tr class="l1"><td><div class="node"><i class="tw"></i><svg class="i"><use href="#pinum"/></svg><span>CLightOff</span></div></td><td>/Constants</td></tr>
                    <tr><td><div class="node"><i class="tw"></i><svg class="i"><use href="#mode"/></svg><span>Mode Declaration Groups</span></div></td><td></td></tr>
                    <tr><td><div class="node"><button class="tw open" aria-label="Collapse"></button><svg class="i"><use href="#port"/></svg><span>Application Port Interfaces</span></div></td><td></td></tr>
                    <tr class="l1"><td><div class="node"><i class="tw"></i><svg class="i nv"><use href="#nv"/></svg><span>NvSWC_NvMAdministration</span></div></td><td>/Predefined_DEV/PortInterfaces</td></tr>
                    <tr class="l1"><td><div class="node"><i class="tw"></i><svg class="i nv"><use href="#nv"/></svg><span>NvSWC_NvMNotifyInitBlock</span></div></td><td>/Predefined_DEV/PortInterfaces</td></tr>
                    <tr class="l1"><td><div class="node"><i class="tw"></i><svg class="i nv"><use href="#nv"/></svg><span>NvSWC_NvMNotifyJobFinished</span></div></td><td>/Predefined_DEV/PortInterfaces</td></tr>
                    <tr class="l1"><td><div class="node"><i class="tw"></i><svg class="i nv"><use href="#nv"/></svg><span>NvSWC_NvMService</span></div></td><td>/Predefined_DEV/PortInterfaces</td></tr>
                    <tr class="l1"><td><div class="node"><i class="tw"></i><svg class="i nv"><use href="#nv"/></svg><span>NvSWC_NvMService_AC2</span></div></td><td>/Predefined_DEV/PortInterfaces</td></tr>
                    <tr class="l1"><td><div class="node"><i class="tw"></i><svg class="i nv"><use href="#nv"/></svg><span>NvSWC_NvMService_AC2_Defs</span></div></td><td>/Predefined_DEV/PortInterfaces</td></tr>
                    <tr class="l1"><td><div class="node"><i class="tw"></i><svg class="i nv"><use href="#nv"/></svg><span>NvSWC_NvMService_AC2_DS</span></div></td><td>/Predefined_DEV/PortInterfaces</td></tr>
                    <tr class="l1"><td><div class="node"><i class="tw"></i><svg class="i nv"><use href="#nv"/></svg><span>NvSWC_NvMService_AC2_DS_Defs</span></div></td><td>/Predefined_DEV/PortInterfaces</td></tr>
                  </tbody>
                </table>
              </div>
              <div class="scroll">
                <div class="cap"></div>
                <button aria-label="Scroll up"><svg class="s"><use href="#chevup"/></svg></button>
                <div class="track"><div class="thumb"></div></div>
                <button aria-label="Scroll down"><svg class="s"><use href="#chev"/></svg></button>
              </div>
              <div class="mark"></div>
              <div class="callout"><b>1</b><p>此处就是生成创建的两个Numeric Constant（数字常量）</p></div>
            </div>
          </div>
          <div class="viewtabs">
            <button class="on">Types</button><button>Packages</button><button>Files</button>
          </div>
        </div>
        <div class="refs">
          <section class="panel ref1">
            <header><h2>Referenced Objects</h2><button aria-label="Maximize"><svg class="s"><use href="#max"/></svg></button><button aria-label="Pin"><svg class="s"><use href="#pin"/></svg></button><button aria-label="Close"><svg class="s"><use href="#x"/></svg></button></header>
            <div class="box"><table class="cols"><thead><tr><th>Name</th><th>Type</th><th>Package</th></tr></thead></table></div>
          </section>
          <section class="panel ref2">
            <header><h2>Referencing Objects</h2><button aria-label="Maximize"><svg class="s"><use href="#max"/></svg></button><button aria-label="Pin"><svg class="s"><use href="#pin"/></svg></button><button aria-label="Close"><svg class="s"><use href="#x"/></svg></button></header>
            <div class="box"><table class="cols"><thead><tr><th>Name</th><th>Type</th><th>Package</th></tr></thead></table></div>
          </section>
        </div>
      </div>
    </section>

    <section class="panel messages">
      <header><h2>Messages</h2><button aria-label="Pin"><svg class="s"><use href="#pin"/></svg></button></header>
      <div class="msgbody">
        <div class="side">
          <span class="grip"></span>
          <button aria-label="Clear"><svg class="i"><use href="#del"/></svg></button>
          <button aria-label="Filter"><svg class="i"><use href="#funnel"/></svg></button>
          <button aria-label="Save"><svg class="i"><use href="#save"/></svg></button>
          <hr>
          <button aria-label="Description"><svg class="i"><use href="#desc"/></svg></button>
        </div>
        <div class="box"><table class="cols msg"><colgroup><col class="c-id"><col></colgroup><thead><tr><th>ID</th><th>Message</th></tr></thead></table></div>
      </div>
      <div class="msgtabs">
        <button><svg class="i"><use href="#mon"/></svg>Action Log</button>
        <button class="on"><svg class="i"><use href="#warn"/></svg>Messages</button>
        <button><svg class="i"><use href="#bino"/></svg>Find Results</button>
        <button><svg class="i"><use href="#diff"/></svg>Differences</button>
      </div>
    </section>
  </div>

  <section class="panel props">
    <header><h2>Properties</h2><button aria-label="Pin"><svg class="s"><use href="#pin"/></svg></button><button aria-label="Close"><svg class="s"><use href="#x"/></svg></button></header>
    <div class="propbar">
      <button class="tool on" aria-label="Categorized"><svg class="i"><use href="#cat"/></svg></button>
      <button class="tool" aria-label="Alphabetical"><svg class="i"><use href="#azc"/></svg></button>
      <button class="tool" aria-label="Property pages"><svg class="i"><use href="#list"/></svg></button>
      <span class="rule"></span>
      <button class="tool on" aria-label="Description"><svg class="i"><use href="#desc"/></svg></button>
      <div class="search"><input placeholder="&lt;Filter&gt;" aria-label="Filter properties"><button aria-label="Search"><svg class="m"><use href="#mag"/></svg></button><button aria-label="Filter history"><svg class="s"><use href="#chev"/></svg></button></div>
    </div>
    <div class="propgrid"></div>
    <div class="propdesc"></div>
  </section>
</main>

<footer class="status">Design Mode</footer>
</body>
</html>
```
FILE: styles.css
```css
* { box-sizing: border-box; }
:root {
  --line: #c6c6c6;
  --face: #f5f5f5;
  --blue: #1b4789;
  --ink: #444;
}
body {
  margin: 0;
  height: 100vh;
  display: flex;
  flex-direction: column;
  overflow: hidden;
  background: var(--face);
  color: var(--ink);
  font: 17px/26px "Noto Sans", "Open Sans", sans-serif;
}
h1, h2, p { margin: 0; font-weight: 400; font-size: inherit; }
button, input { font: inherit; color: inherit; }
button { border: 0; padding: 0; background: none; display: flex; align-items: center; justify-content: center; }
input { min-width: 0; border: 0; padding: 0 6px; background: #fff; outline: 0; }
input::placeholder { color: #999; opacity: 1; }
svg { display: block; flex: none; }
.paints { position: absolute; width: 0; height: 0; }
.symbols { display: none; }
.i { width: 16px; height: 16px; }
.s { width: 10px; height: 10px; color: #666; }
.m { width: 12px; height: 12px; }
.tag { font-size: 6px; font-weight: 700; text-anchor: middle; fill: #666; }
.down { width: 8px; height: 5px; background: #888; clip-path: polygon(0 0, 100% 0, 50% 100%); }
.down.dark { background: #555; }

/* title bar */
.titlebar { height: 42px; flex: none; display: grid; grid-template-columns: 1fr auto 1fr; grid-template-rows: 38px; align-items: center; padding: 0 6px; }
.titlebar h1 { grid-column: 2; grid-row: 1; }
.logo { grid-column: 1; grid-row: 1; width: 24px; height: 24px; }
.quick { grid-column: 1; grid-row: 1; display: flex; gap: 18px; padding-left: 40px; }
.custom { margin-left: 6px; }
.custom svg { width: 8px; height: 8px; }
.wincontrols { grid-column: 3; display: flex; justify-content: flex-end; gap: 24px; padding-right: 10px; color: #777; }
.wincontrols svg { width: 14px; height: 14px; color: inherit; }

/* ribbon tabs */
.menu { height: 34px; flex: none; display: flex; box-shadow: inset 0 -1px var(--line); }
.menu button { padding: 0 15px; border: 1px solid transparent; border-bottom: 0; }
.menu .file { background: var(--blue); color: #fff; width: 80px; margin-right: 4px; }
.menu .on { background: #fafafa; border-color: var(--line); color: var(--blue); }
.about { margin: 9px 8px 0 auto; }

/* ribbon */
.ribbon { flex: none; height: 130px; display: flex; align-items: flex-start; padding-top: 7px; background: #fafafa; border-bottom: 1px solid var(--line); }
.group { border-right: 1px solid var(--line); height: 116px; }
.group h2 { text-align: center; line-height: 20px; padding-top: 12px; }
.tools { display: flex; height: 86px; color: #999; }
.stack { display: flex; flex-direction: column; gap: 4px; align-items: flex-start; }
.stack.two { justify-content: center; gap: 14px; }
.stack button { gap: 5px; height: 26px; color: #999; }
.ruled { position: relative; }
.ruled::before { content: ""; position: absolute; left: 0; top: 2px; bottom: 2px; width: 2px; background: #d4d4d4; }
.g-mode { width: 98px; padding-left: 14px; }
.g-mode h2 { margin-left: -14px; }
.g-mode .stack button { gap: 6px; }
.g-canvas .tools { padding-left: 14px; }
.g-canvas { width: 731px; }
.g-canvas .ruled { padding-left: 12px; width: 164px; white-space: nowrap; }
.zooms { width: 137px; }
.factor { display: flex; align-items: center; width: 184px; justify-content: flex-end; gap: 2px; padding-right: 14px; }
.combo { display: flex; width: 120px; height: 30px; border: 1px solid #ababab; background: #fff; }
.combo input { flex: 1; color: #999; }
.combo button { width: 25px; background: #f0f0f0; border-left: 1px solid #ababab; }
.g-design { width: 217px; }
.single { width: 44px; align-items: center; }
.matrix { display: grid; grid-template-columns: repeat(4, 30px); grid-auto-rows: 26px; row-gap: 4px; padding: 0 4px; }
.matrix.rows2 { row-gap: 14px; padding: 10px 12px; }
.narrow { padding-left: 13px; }
.g-layout { width: 190px; }
.collapse { margin: 100px 13px 0 auto; height: 14px; }

/* workspace */
.workspace { flex: 1; min-height: 0; display: grid; grid-template-columns: minmax(0, 1fr) 508px; column-gap: 6px; padding: 0 2px 2px; }
.left { display: flex; flex-direction: column; min-height: 0; }
.docs { flex: 1; min-height: 0; display: flex; flex-direction: column; }
.doctabs { height: 40px; flex: none; display: flex; align-items: stretch; background: #e9ecf1; border-bottom: 2px solid var(--blue); padding-top: 2px; }
.doctab { display: flex; align-items: center; gap: 4px; padding: 0 14px; border: 1px solid var(--line); border-bottom: 0; background: var(--face); margin-top: 2px; width: 334px; color: #666; }
.doctab.on { width: 218px; background: var(--blue); color: #fff; border: 0; margin: 0; padding-left: 16px; }
.doctab .s { color: #fff; }
.doctab .pin { margin: 0 8px 0 auto; }
.more { margin: 0 10px 0 auto; }
.frame { flex: 1; min-height: 0; display: flex; gap: 4px; border: 1px solid var(--line); border-top: 0; padding: 1px 2px 0 0; }
.browser { flex: 1; min-width: 0; display: flex; flex-direction: column; }
.browser-box { flex: 1; min-height: 0; display: flex; flex-direction: column; border: 1px solid var(--line); }
.search { display: flex; height: 30px; flex: none; border: 1px solid #ababab; }
.search input { flex: 1; }
.search button { width: 25px; border-left: 1px solid #ababab; background: linear-gradient(#f3f3f3, #e6e6e6); }
.browser .search { margin: 2px 7px 5px 2px; }
.treegrid { flex: 1; min-height: 0; display: grid; grid-template-columns: minmax(0, 1fr) 27px; grid-template-rows: minmax(0, 1fr); position: relative; margin: 0 7px 6px 0; border: 1px solid var(--line); background: #fff; }
.treeview { overflow: hidden; }
table { border-collapse: separate; border-spacing: 0; table-layout: fixed; width: 100%; }
th { height: 32px; padding: 0 8px 0 6px; text-align: left; font-weight: 400; line-height: 28px; vertical-align: top; background: var(--face); border-bottom: 1px solid var(--line); border-right: 1px solid var(--line); }
th::after { content: ""; float: right; margin-top: 13px; width: 8px; height: 5px; background: #777; clip-path: polygon(50% 0, 100% 100%, 0 100%); }
td { height: 26px; padding: 0 0 0 5px; white-space: nowrap; }
td:first-child { padding: 0; }
.c-name { width: 54.1%; }
.node { display: flex; align-items: center; height: 26px; }
.node .i { margin: 0 12px; }
.node .nv { width: 22px; margin: 0 13px 0 5px; }
.node span { flex: 1; padding-left: 6px; }
.l1 .node { padding-left: 43px; }
.l2 .node { padding-left: 86px; }
.tw { width: 44px; height: 26px; flex: none; }
.tw::before { content: ""; width: 6px; height: 6px; background: #777; }
.tw.open::before { clip-path: polygon(100% 0, 100% 100%, 0 100%); }
.tw.shut::before { width: 4px; height: 8px; clip-path: polygon(0 0, 100% 50%, 0 100%); }
.strong { font-weight: 700; font-size: 18px; }
.selected span, .selected td:last-child { background: #cde4f7; border: 1px dotted #222; border-right: 0; }
.selected td:last-child { border-left: 0; border-right: 1px dotted #222; }
.selected span { margin-left: 2px; padding-left: 3px; line-height: 24px; }
.scroll { display: flex; flex-direction: column; background: #ebebeb; }
.scroll button { height: 26px; }
.cap { height: 32px; background: var(--face); border-bottom: 1px solid var(--line); }
.track { flex: 1; }
.thumb { height: 59%; background: #cdcdcd; }
.mark { position: absolute; left: 89px; top: 499px; width: 846px; height: 56px; border: 3px solid #fb3434; }
.callout { position: absolute; left: 945px; top: 498px; display: flex; align-items: center; gap: 14px; }
.callout b { width: 30px; height: 30px; border-radius: 50%; background: #fb3434; color: #fff; font-weight: 400; line-height: 30px; text-align: center; }
.callout p { position: relative; height: 50px; padding: 0 25px 0 9px; line-height: 50px; border-radius: 4px; background: rgba(0, 0, 0, .6); color: #fff; white-space: nowrap; font-size: 24px; font-family: "Open Sans", "Noto Sans CJK SC", sans-serif; }
.callout p::before { content: ""; position: absolute; left: -7px; top: 17px; width: 7px; height: 16px; background: rgba(0, 0, 0, .6); clip-path: polygon(100% 0, 100% 100%, 0 50%); }
.viewtabs { display: flex; height: 37px; flex: none; align-items: flex-start; margin-top: -1px; }
.viewtabs button { height: 35px; padding: 0 14px; border: 1px solid var(--line); border-left: 0; }
.viewtabs .on { position: relative; height: 37px; width: 81px; background: var(--face); border-top: 0; border-left: 1px solid var(--line); }

/* tool panels */
.panel { display: flex; flex-direction: column; border: 1px solid var(--line); padding: 0 3px 3px; background: var(--face); min-height: 0; }
.panel header { height: 54px; flex: none; display: flex; align-items: center; gap: 11px; padding: 0 14px; }
.panel h2 { flex: 1; font-size: 21px; }
.box { flex: 1; background: #fff; border: 1px solid var(--line); }
.box th:last-child { border-right: 0; }
.refs { width: 451px; flex: none; display: flex; flex-direction: column; gap: 6px; padding: 2px 0; }
.ref1 { flex: 19 0 0; }
.ref2 { flex: 20 0 0; }
.messages { flex: none; height: 354px; margin-top: 6px; padding-bottom: 0; }
.msgbody { flex: 1; display: flex; min-height: 0; }
.side { width: 41px; flex: none; display: flex; flex-direction: column; align-items: center; padding: 8px 2px 0 0; }
.side button { height: 26px; }
.side hr { width: 29px; margin: 3px 0 5px; border: 0; border-top: 1px solid var(--line); }
.grip { width: 16px; height: 4px; margin-bottom: 4px; border: solid var(--line); border-width: 1px 0; }
.c-id { width: 35.7%; }
.msgtabs { display: flex; height: 43px; flex: none; align-items: flex-start; padding: 3px 0 0 3px; }
.msgtabs button { height: 35px; gap: 4px; padding: 0 15px; border-right: 1px solid #d4d4d4; }
.msgtabs .on { color: var(--blue); }

.props { margin-top: 2px; }
.props header { padding: 0 12px 0 14px; }
.propbar { display: flex; align-items: center; flex: none; height: 30px; margin: 3px 8px 3px 3px; }
.tool { width: 29px; height: 30px; }
.tool.on { background: #b1d6f0; width: 30px; }
.rule { width: 1px; height: 24px; background: var(--line); margin: 0 6px 0 5px; }
.propbar .search { flex: 1; margin-left: 6px; }
.propgrid { flex: 1; background: #a0a0a0; border: 1px solid var(--line); }
.propdesc { height: 160px; border: 1px solid var(--line); }

.status { flex: none; height: 36px; line-height: 38px; padding: 0 10px; background: var(--blue); color: #fff; }
```
